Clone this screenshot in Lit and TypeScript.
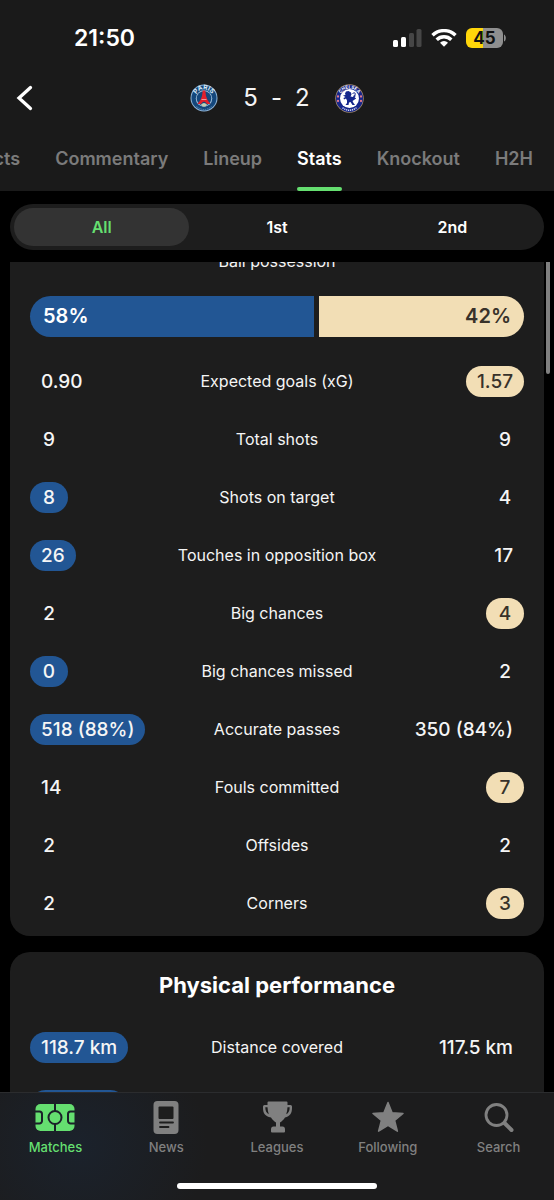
import { LitElement, html, css, svg } from "lit";
import { customElement, property, state } from "lit/decorators.js";
import { classMap } from "lit/directives/class-map.js";
import { styleMap } from "lit/directives/style-map.js";

type Side = "home" | "away" | "none";
interface Stat {
  label: string;
  home: string;
  away: string;
  lead: Side;
}

const TOP_STATS: Stat[] = [
  { label: "Expected goals (xG)", home: "0.90", away: "1.57", lead: "away" },
  { label: "Total shots", home: "9", away: "9", lead: "none" },
  { label: "Shots on target", home: "8", away: "4", lead: "home" },
  { label: "Touches in opposition box", home: "26", away: "17", lead: "home" },
  { label: "Big chances", home: "2", away: "4", lead: "away" },
  { label: "Big chances missed", home: "0", away: "2", lead: "home" },
  { label: "Accurate passes", home: "518 (88%)", away: "350 (84%)", lead: "home" },
  { label: "Fouls committed", home: "14", away: "7", lead: "away" },
  { label: "Offsides", home: "2", away: "2", lead: "none" },
  { label: "Corners", home: "2", away: "3", lead: "away" },
];

const PHYSICAL_STATS: Stat[] = [
  { label: "Distance covered", home: "118.7 km", away: "117.5 km", lead: "home" },
  { label: "Walking", home: "40.6 km", away: "39.8 km", lead: "home" },
];

@customElement("status-bar")
class StatusBar extends LitElement {
  static styles = css`
    :host {
      display: flex;
      align-items: center;
      justify-content: space-between;
      height: 76px;
      padding: 0 48px 0 74px;
    }
    .time {
      font-size: 23px;
      font-weight: 600;
      color: #fff;
    }
    .icons {
      display: flex;
      align-items: center;
      gap: 9px;
    }
    .battery-text {
      font-size: 17px;
      font-weight: 700;
    }
  `;
  render() {
    return html`
      <span class="time">21:50</span>
      <span class="icons">
        <svg width="29" height="18" viewBox="0 0 29 18" aria-label="Signal">
          <rect x="0" y="11" width="5" height="7" rx="1.5" fill="#fff" />
          <rect x="8" y="8" width="5" height="10" rx="1.5" fill="#fff" />
          <rect x="16" y="4" width="5" height="14" rx="1.5" fill="#464646" />
          <rect x="23.5" y="0" width="5" height="18" rx="1.5" fill="#464646" />
        </svg>
        <svg width="26" height="18" viewBox="0 0 26 18" aria-label="Wi-Fi">
          <g fill="none" stroke="#fff" stroke-width="3.4">
            <path d="M1.5 6.3a16.4 16.4 0 0 1 23 0" />
            <path d="M5.7 10.7a10.4 10.4 0 0 1 14.6 0" />
          </g>
          <path d="M13 17.8l-4-4.1a5.7 5.7 0 0 1 8 0z" fill="#fff" />
        </svg>
        <svg width="40" height="20" viewBox="0 0 40 20" aria-label="Battery">
          <path d="M6 0h11v20H6a6 6 0 0 1-6-6V6a6 6 0 0 1 6-6z" fill="#ffd60a" />
          <path d="M17 0h14a6 6 0 0 1 6 6v8a6 6 0 0 1-6 6H17z" fill="#8f8f8f" />
          <path d="M38 6.5c2.4 1 2.4 6 0 7z" fill="#8f8f8f" />
          <text class="battery-text" x="18.5" y="16" text-anchor="middle" fill="#111">45</text>
        </svg>
      </span>
    `;
  }
}

@customElement("match-header")
class MatchHeader extends LitElement {
  static styles = css`
    :host {
      display: grid;
      grid-template-columns: 60px 1fr 60px;
      align-items: center;
      height: 44px;
    }
    .back {
      border: 0;
      background: none;
      padding: 0 0 0 16px;
      display: flex;
      cursor: pointer;
    }
    .score {
      display: flex;
      align-items: center;
      justify-content: center;
      gap: 25px;
      font-size: 24px;
      line-height: 30px;
      font-weight: 400;
      color: #f4f4f4;
    }
    .goals {
      display: flex;
      gap: 13px;
    }
    .crest {
      display: block;
    }
    .crest-text {
      font-weight: 700;
    }
  `;
  render() {
    return html`
      <button class="back" aria-label="Back">
        <svg width="18" height="26" viewBox="0 0 18 26">
          <path d="M14.5 2.5L3 13l11.500 10.500" fill="none" stroke="#fff" stroke-width="3.300" stroke-linecap="round" stroke-linejoin="miter" />
        </svg>
      </button>
      <div class="score">
        <svg class="crest" width="28" height="28" viewBox="0 0 56 56" role="img" aria-label="Paris Saint-Germain">
          <defs><path id="psg-arc" d="M11 28a17 17 0 0 1 34 0" /></defs>
          <circle cx="28" cy="28" r="27" fill="#8fb4d6" />
          <circle cx="28" cy="28" r="25" fill="#14477c" />
          <circle cx="28" cy="29" r="16.500" fill="#9dbdd8" />
          <circle cx="28" cy="29" r="14.500" fill="#14477c" />
          <path d="M25.500 13h5l1.500 11q2 9 9 16h-7q-3-5-6-5t-6 5h-7q7-7 9-16z" fill="#e2202c" />
          <path d="M23 31h10" stroke="#f7b9bd" stroke-width="1.500" />
          <path d="M22 41q6-6 12 0l-3 4h-6z" fill="#c5ccb0" />
          <path d="M13 45q15 12 30 0" fill="none" stroke="#5c87b4" stroke-width="2" stroke-dasharray="3 1.500" />
          <text class="crest-text" font-size="13" fill="#d9e8f4" text-anchor="middle">
            <textPath href="#psg-arc" startOffset="50%">PARIS</textPath>
          </text>
        </svg>
        <div class="goals"><span>5</span><span>-</span><span>2</span></div>
        <svg class="crest" width="29" height="29" viewBox="0 0 58 58" role="img" aria-label="Chelsea">
          <defs><path id="che-arc" d="M9 29a20 20 0 0 1 40 0" /></defs>
          <circle cx="29" cy="29" r="28.500" fill="#a28b72" />
          <circle cx="29" cy="29" r="27" fill="#16268b" />
          <circle cx="29" cy="29" r="19" fill="#fff" />
          <path d="M22 15l5-1 5 3 1 4-2 4 5 1 2-4 2 1-1 5 3 1-4 3-3 2 2 4 3 4h-5l-4-6-3 1-1 5h-6l3-4v-5l-2-4-4 2-1-3 4-2-5-3 5-1-1-3z" fill="#14268c" />
          <path d="M35 19q7-4 5 3t1 8" fill="none" stroke="#14268c" stroke-width="2" />
          <g fill="#e0788c">
            <circle cx="6" cy="25" r="2.300" /><circle cx="6" cy="34" r="2.300" />
            <circle cx="52" cy="25" r="2.300" /><circle cx="52" cy="34" r="2.300" />
          </g>
          <path d="M15 47.500q14 10 28 0" fill="none" stroke="#d4daf2" stroke-width="3" stroke-dasharray="2.500 1.500" />
          <text class="crest-text" font-size="9" fill="#fff" text-anchor="middle">
            <textPath href="#che-arc" startOffset="50%">CHELSEA</textPath>
          </text>
        </svg>
      </div>
    `;
  }
}

@customElement("match-tabs")
class MatchTabs extends LitElement {
  @state() active = "Stats";
  static styles = css`
    :host {
      display: flex;
      justify-content: flex-end;
      gap: 35px;
      height: 71px;
      padding-right: 21px;
      overflow: hidden;
    }
    .tab {
      display: flex;
      flex-direction: column;
      flex: none;
      padding: 28px 0 0;
      font-size: 18px;
      line-height: 22px;
      font-weight: 600;
      color: #7b7b7b;
      text-decoration: none;
    }
    .active {
      color: #fff;
    }
    .active::after {
      content: "";
      height: 4px;
      margin-top: auto;
      border-radius: 2px;
      background: #65df70;
    }
  `;
  render() {
    return ["Facts", "Commentary", "Lineup", "Stats", "Knockout", "H2H"].map(
      (t) => html`<a
        class=${classMap({ tab: true, active: t === this.active })}
        href="#${t.toLowerCase()}"
        @click=${() => (this.active = t)}
        >${t}</a
      >`
    );
  }
}

@customElement("period-switch")
class PeriodSwitch extends LitElement {
  @state() active = "All";
  static styles = css`
    :host {
      display: flex;
      margin: 13px 10px 12px;
      padding: 4px;
      border-radius: 23px;
      background: #1d1d1d;
    }
    .period {
      flex: 1;
      height: 38px;
      padding: 0;
      border: 0;
      border-radius: 19px;
      background: none;
      color: #fff;
      font: inherit;
      font-size: 16px;
      font-weight: 600;
      cursor: pointer;
    }
    .active {
      background: #333;
      color: #65df70;
    }
  `;
  render() {
    return ["All", "1st", "2nd"].map(
      (p) => html`<button
        class=${classMap({ period: true, active: p === this.active })}
        aria-pressed=${p === this.active}
        @click=${() => (this.active = p)}
      >
        ${p}
      </button>`
    );
  }
}

@customElement("possession-bar")
class PossessionBar extends LitElement {
  @property({ type: Number }) home = 50;
  static styles = css`
    :host {
      display: block;
    }
    .label {
      margin: 0 0 24px;
      text-align: center;
      font-size: 16px;
      line-height: 22px;
      font-weight: 400;
    }
    .bar {
      display: grid;
      gap: 5px;
      margin-bottom: 15px;
      font-size: 20px;
      line-height: 41px;
      font-weight: 600;
    }
    .part {
      padding: 0 13px;
    }
    .home {
      border-radius: 21px 0 0 21px;
      background: #225694;
      color: #fff;
    }
    .away {
      border-radius: 0 21px 21px 0;
      background: #f2deb5;
      color: #38322a;
      text-align: right;
    }
  `;
  render() {
    const away = 100 - this.home;
    return html`
      <h3 class="label">Ball possession</h3>
      <div class="bar" style=${styleMap({ gridTemplateColumns: `${this.home}fr ${away}fr` })}>
        <span class="part home">${this.home}%</span>
        <span class="part away">${away}%</span>
      </div>
    `;
  }
}

@customElement("stat-table")
class StatTable extends LitElement {
  @property({ attribute: false }) rows: Stat[] = [];
  static styles = css`
    :host {
      display: block;
    }
    .table {
      width: 100%;
      table-layout: fixed;
      border-collapse: collapse;
    }
    .cell {
      height: 58px;
      padding: 0;
      width: 26%;
      white-space: nowrap;
    }
    .cell.right {
      text-align: right;
    }
    .label {
      padding: 0;
      text-align: center;
      font-size: 16px;
      font-weight: 400;
      white-space: nowrap;
    }
    .value {
      display: inline-block;
      box-sizing: border-box;
      min-width: 38px;
      height: 31px;
      padding: 0 11px;
      border-radius: 16px;
      font-size: 19px;
      line-height: 31px;
      font-weight: 500;
      text-align: center;
      vertical-align: middle;
    }
    .home {
      background: #225694;
    }
    .away {
      background: #f2deb5;
      color: #38322a;
    }
  `;
  render() {
    return html`<table class="table">
      <tbody>
        ${this.rows.map(
          (r) => html`<tr>
            <td class="cell"><span class=${classMap({ value: true, home: r.lead === "home" })}>${r.home}</span></td>
            <th class="label" scope="row">${r.label}</th>
            <td class="cell right"><span class=${classMap({ value: true, away: r.lead === "away" })}>${r.away}</span></td>
          </tr>`
        )}
      </tbody>
    </table>`;
  }
}

const NAV_ICONS = {
  Matches: svg`
    <rect x="0.500" y="4" width="39" height="27" rx="5" fill="currentColor" />
    <g fill="none" stroke="#1b2129" stroke-width="2">
      <path d="M20 4v7M20 24v7M0 11.500h4.500a2.500 2.500 0 0 1 2.500 2.500v7a2.500 2.500 0 0 1-2.500 2.500H0M40 11.500h-4.500a2.500 2.500 0 0 0-2.500 2.500v7a2.500 2.500 0 0 0 2.500 2.500H40" />
      <circle cx="20" cy="17.500" r="6.500" />
    </g>`,
  News: svg`
    <rect x="7.500" y="1" width="25" height="33" rx="4" fill="currentColor" />
    <rect x="12.500" y="6.500" width="15" height="12.500" rx="1" fill="#1d1d1d" />
    <path d="M14 22.500h13M14 27h8.500" stroke="#1d1d1d" stroke-width="1.800" stroke-linecap="round" />`,
  Leagues: svg`
    <path d="M10.500 2.500q0-1 1-1h18q1 0 1 1V5h3q1.500 0 1.500 1.500V8c0 5-2 8.500-7 9.500-1.500 2.500-3.500 4-5 5v4h2.500q2.500 0 2.500 3v2q0 1-1 1h-12q-1 0-1-1v-2q0-3 2.500-3H19v-4c-1.500-1-3.500-2.500-5-5C8 16.500 6 13 6 8V6.500Q6 5 7.500 5h3z" fill="currentColor" />
    <path d="M8.300 7.300h2.200q.2 4 1.300 7C9.200 13 8.300 10.500 8.300 7.300zM32.700 7.300h-2.200q-.2 4-1.300 7 3.500-1.800 3.500-7z" fill="#1d1d1d" />`,
  Following: svg`
    <path d="M20 2.500l4.100 10.300 10.900.700-8.400 7 2.800 10.700-9.400-5.900-9.400 5.900 2.800-10.700-8.400-7 10.900-.7z" fill="currentColor" stroke="currentColor" stroke-width="1.500" stroke-linejoin="round" />`,
  Search: svg`
    <circle cx="17.500" cy="15" r="10.500" fill="none" stroke="currentColor" stroke-width="2.800" />
    <path d="M25.500 23l7 7" stroke="currentColor" stroke-width="4" stroke-linecap="round" />`,
};

@customElement("bottom-nav")
class BottomNav extends LitElement {
  @state() active = "Matches";
  static styles = css`
    :host {
      display: flex;
      flex-direction: column;
      align-items: center;
      box-sizing: border-box;
      flex: none;
      height: 108px;
      border-top: 1px solid #2b2c2e;
      background: radial-gradient(ellipse 130px 120px at 14% 50%, #1b222c, #1c1c1d 100%);
    }
    .items {
      display: flex;
      align-self: stretch;
    }
    .item {
      flex: 1;
      display: flex;
      flex-direction: column;
      align-items: center;
      gap: 4px;
      padding-top: 7px;
      font-size: 13px;
      line-height: 16px;
      font-weight: 500;
      color: #808080;
      text-decoration: none;
    }
    .active {
      color: #65df70;
    }
    .indicator {
      width: 36%;
      height: 6px;
      margin: auto 0 11px;
      border-radius: 3px;
      background: #fff;
    }
  `;
  render() {
    return html`
      <nav class="items">
        ${Object.entries(NAV_ICONS).map(
          ([name, icon]) => html`<a
            class=${classMap({ item: true, active: name === this.active })}
            href="#${name.toLowerCase()}"
            @click=${() => (this.active = name)}
          >
            <svg width="40" height="35" viewBox="0 0 40 35" aria-hidden="true">${icon}</svg>
            <span>${name}</span>
          </a>`
        )}
      </nav>
      <div class="indicator"></div>
    `;
  }
}

@customElement("app-root")
class AppRoot extends LitElement {
  static styles = css`
    :host {
      display: flex;
      flex-direction: column;
      height: 100vh;
      background: #000;
      color: #f5f5f5;
      font-family: Inter, "Liberation Sans", sans-serif;
    }
    .top {
      flex: none;
      background: #1a1a1a;
    }
    .scroller {
      position: relative;
      flex: 1;
      min-height: 0;
      overflow: hidden;
    }
    .thumb {
      position: absolute;
      top: 0;
      right: 4px;
      width: 4px;
      height: 112px;
      border-radius: 0 0 2px 2px;
      background: #808080;
    }
    .cards {
      display: flex;
      flex-direction: column;
      gap: 16px;
      padding: 0 10px;
      margin-top: -32px;
    }
    .card {
      padding: 20px 20px 4px;
      border-radius: 20px;
      background: #1d1d1d;
    }
    .title {
      margin: 0 0 20px;
      text-align: center;
      font-size: 22px;
      line-height: 26px;
      font-weight: 700;
      color: #fff;
    }
  `;
  render() {
    return html`
      <header class="top">
        <status-bar></status-bar>
        <match-header></match-header>
        <match-tabs></match-tabs>
      </header>
      <period-switch></period-switch>
      <main class="scroller">
        <div class="cards">
          <section class="card">
            <possession-bar .home=${58}></possession-bar>
            <stat-table .rows=${TOP_STATS}></stat-table>
          </section>
          <section class="card">
            <h2 class="title">Physical performance</h2>
            <stat-table .rows=${PHYSICAL_STATS}></stat-table>
          </section>
        </div>
        <div class="thumb"></div>
      </main>
      <bottom-nav></bottom-nav>
    `;
  }
}
